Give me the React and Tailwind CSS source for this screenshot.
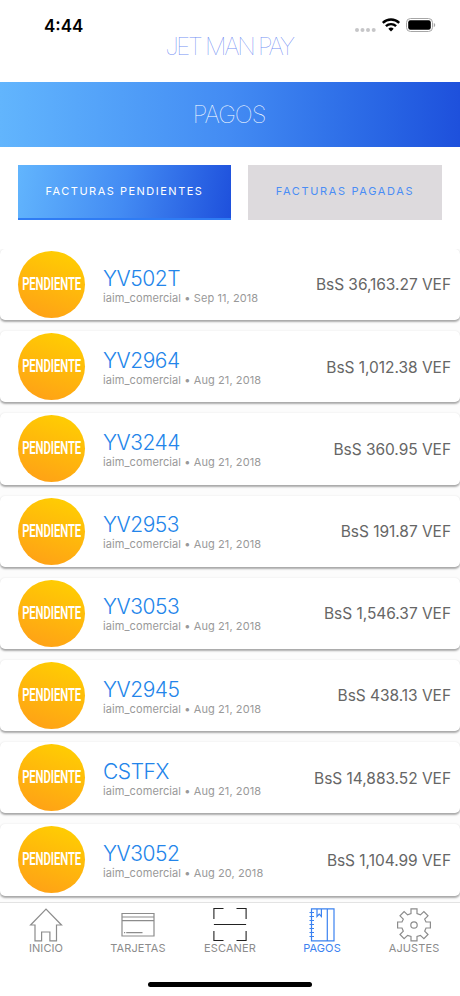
import React, { useState } from "react";

const invoices = [
  { id: 1, code: "YV502T", date: "Sep 11, 2018", amount: "36,163.27" },
  { id: 2, code: "YV2964", date: "Aug 21, 2018", amount: "1,012.38" },
  { id: 3, code: "YV3244", date: "Aug 21, 2018", amount: "360.95" },
  { id: 4, code: "YV2953", date: "Aug 21, 2018", amount: "191.87" },
  { id: 5, code: "YV3053", date: "Aug 21, 2018", amount: "1,546.37" },
  { id: 6, code: "YV2945", date: "Aug 21, 2018", amount: "438.13" },
  { id: 7, code: "CSTFX", date: "Aug 21, 2018", amount: "14,883.52" },
  { id: 8, code: "YV3052", date: "Aug 20, 2018", amount: "1,104.99" },
];

const HomeIcon = () => (
  <svg width="34" height="34" viewBox="0 0 34 34" fill="none" stroke="currentColor" strokeWidth="1.2">
    <path d="M17 1.2 1.6 17H6v15.800h6.600V24h8.300v8.800h6.600V17h5z" />
  </svg>
);

const CardIcon = () => (
  <svg width="34" height="34" viewBox="0 0 34 34" fill="none" stroke="currentColor" strokeWidth="1.2">
    <path d="M1 5.500h32v22.500H1zM1 9h32M1 12.700h32M3 24.700h1.200M5.200 24.700H21.500" />
  </svg>
);

const ScanIcon = () => (
  <svg width="34" height="34" viewBox="0 0 34 34" fill="none" stroke="#222" strokeWidth="1.1">
    <path d="M10.500 .5H.9V11M23.500 .5H33.100V11M.9 23v9.500h9.600M33.100 23v9.500h-9.600M.9 16.500h32.200" />
  </svg>
);

const NotebookIcon = () => (
  <svg width="34" height="34" viewBox="0 0 34 34" fill="none" stroke="currentColor" strokeWidth="1.2">
    <path d="M6.500 .8h22.500v32H6.500zM22.300 .8v32M12 .8v7.700l2.200-2.300 2.200 2.300V.8" />
    <path d="M4.500 4.500h4.500M4.500 8.500h4.500M4.500 12.500h4.500M4.500 16.500h4.500M4.500 20.500h4.500M4.500 24.500h4.500M4.500 28.500h4.500" />
  </svg>
);

const GearIcon = () => (
  <svg width="34" height="34" viewBox="0 0 34 34" fill="none" stroke="currentColor" strokeWidth="1.2">
    <path d="M14 .8h6v4.700l3.400 1.400 3.500-3.300 4.100 4.200-3.300 3.400L29 14h4.400v6H29l-1.300 3.200 3.300 3.300-4.100 4.200-3.500-3.300L20 28.500v4.300h-6v-4.300l-3.400-1.100-3.500 3.300L3 26.500l3.300-3.300L5 20H.6v-6H5l1.300-2.800L3 7.800l4.100-4.200 3.500 3.300L14 5.500z" />
    <circle cx="17" cy="17" r="3.200" />
  </svg>
);

const navItems = [
  { label: "INICIO", icon: HomeIcon },
  { label: "TARJETAS", icon: CardIcon },
  { label: "ESCANER", icon: ScanIcon },
  { label: "PAGOS", icon: NotebookIcon },
  { label: "AJUSTES", icon: GearIcon },
];

const StatusIcons = () => (
  <svg width="84" height="18" viewBox="0 0 84 18">
    <g fill="#c6c6c8">
      <circle cx="4" cy="14" r="2" />
      <circle cx="9.500" cy="14" r="2" />
      <circle cx="15" cy="14" r="2" />
      <circle cx="20.700" cy="14" r="2" />
    </g>
    <g fill="none" stroke="#000" strokeWidth="2.400">
      <path d="M29.800 6.800a12 12 0 0 1 16.400 0" />
      <path d="M32.900 10.200a7.300 7.300 0 0 1 10.200 0" />
    </g>
    <path d="M38 15.500 35.300 12.800a4 4 0 0 1 5.400 0z" />
    <rect x="53.500" y="2.500" width="26" height="13" rx="4" fill="none" stroke="#a6a6a6" />
    <rect x="55.200" y="4.200" width="22.600" height="9.600" rx="2.200" />
    <path d="M80.800 7v4.200q1.500-.5 1.500-2.100t-1.500-2.100z" fill="#a6a6a6" />
  </svg>
);

const PendingBadge = () => (
  <div className="flex size-[67px] shrink-0 items-center justify-center rounded-full bg-linear-[20deg] from-[#ff9d18] to-[#ffd200] pt-px">
    <span className="scale-x-[1.03] scale-y-[1.7] font-['Roboto',sans-serif] text-[11px] leading-[12px] font-semibold tracking-[-0.100px] text-white">
      PENDIENTE
    </span>
  </div>
);

const InvoiceRow = ({ invoice }) => (
  <div className="flex h-[71.200px] shrink-0 items-center rounded-[5px] bg-white pr-[9px] pl-[18px] shadow-[0_2px_2px_rgba(0,0,0,0.32),0_0_2px_rgba(0,0,0,0.1)]">
    <PendingBadge />
    <div className="ml-[18px] flex-1 pt-[3px]">
      <h2 className="text-[21px] leading-[24px] font-[360] tracking-[-0.450px] text-[#2385ea]">
        {invoice.code}
      </h2>
      <p className="text-[11px] leading-[15px] tracking-[0.090px] text-[#999]">
        iaim_comercial • {invoice.date}
      </p>
    </div>
    <span className="pt-px text-[15.500px] tracking-[-0.040px] text-[#666]">BsS {invoice.amount} VEF</span>
  </div>
);

const App = () => {
  const [tab, setTab] = useState("pendientes");
  const rows = tab === "pendientes" ? invoices : [];

  return (
    <div className="flex h-[996px] w-[460px] flex-col overflow-hidden bg-white font-['Inter',sans-serif]">
      <header className="relative h-[82px] shrink-0">
        <div className="flex items-start justify-between pt-[16px] pr-[23px] pl-[44px]">
          <span className="text-[17px] leading-[20px] font-semibold">4:44</span>
          <StatusIcons />
        </div>
        <h1 className="absolute inset-x-0 top-[32px] pr-[2px] text-center text-[24px] leading-[30px] font-thin tracking-[-2.300px] text-[#4068ef]/75">
          JET MAN PAY
        </h1>
      </header>

      <div className="flex h-[65px] shrink-0 items-center justify-center bg-linear-to-r from-[#62b5fd] via-[#438bf3] to-[#1e50dc]">
        <h2 className="pr-[2px] text-[24px] font-thin tracking-[-1.100px] text-white">PAGOS</h2>
      </div>

      <div className="flex shrink-0 gap-[17px] pt-[18px] pl-[18px]">
        <button
          onClick={() => setTab("pendientes")}
          className="h-[55px] w-[213px] border-b-2 border-[#2f7cf4] bg-linear-[100deg] from-[#62b5fd] via-[#438bf3] to-[#1e50dc] text-[11px] tracking-[1.500px] text-white"
        >
          FACTURAS PENDIENTES
        </button>
        <button
          onClick={() => setTab("pagadas")}
          className="h-[55px] w-[194px] border-b-2 border-[#dddadd] bg-[#dddadd] text-[11px] tracking-[1.650px] text-[#4a8df5]"
        >
          FACTURAS PAGADAS
        </button>
      </div>

      <main className="mt-[29px] flex min-h-0 flex-1 flex-col gap-[11px] overflow-hidden bg-[#fcfcfc]">
        {rows.map((invoice) => (
          <InvoiceRow key={invoice.id} invoice={invoice} />
        ))}
      </main>

      <nav className="flex h-[94px] shrink-0 flex-col justify-between border-t border-[#e3e3e3] bg-white pb-[9px]">
        <div className="grid grid-cols-5 pt-[5px]">
          {navItems.map(({ label, icon: Icon }) => (
            <button
              key={label}
              className={`flex flex-col items-center ${
                label === "PAGOS" ? "text-[#3b82f0]" : "text-[#8c8c8c]"
              }`}
            >
              <Icon />
              <span className="text-[11px] leading-[13px] tracking-[0.100px]">{label}</span>
            </button>
          ))}
        </div>
        <div className="mx-auto h-[5px] w-[164px] rounded-full bg-black" />
      </nav>
    </div>
  );
};

export default App;
